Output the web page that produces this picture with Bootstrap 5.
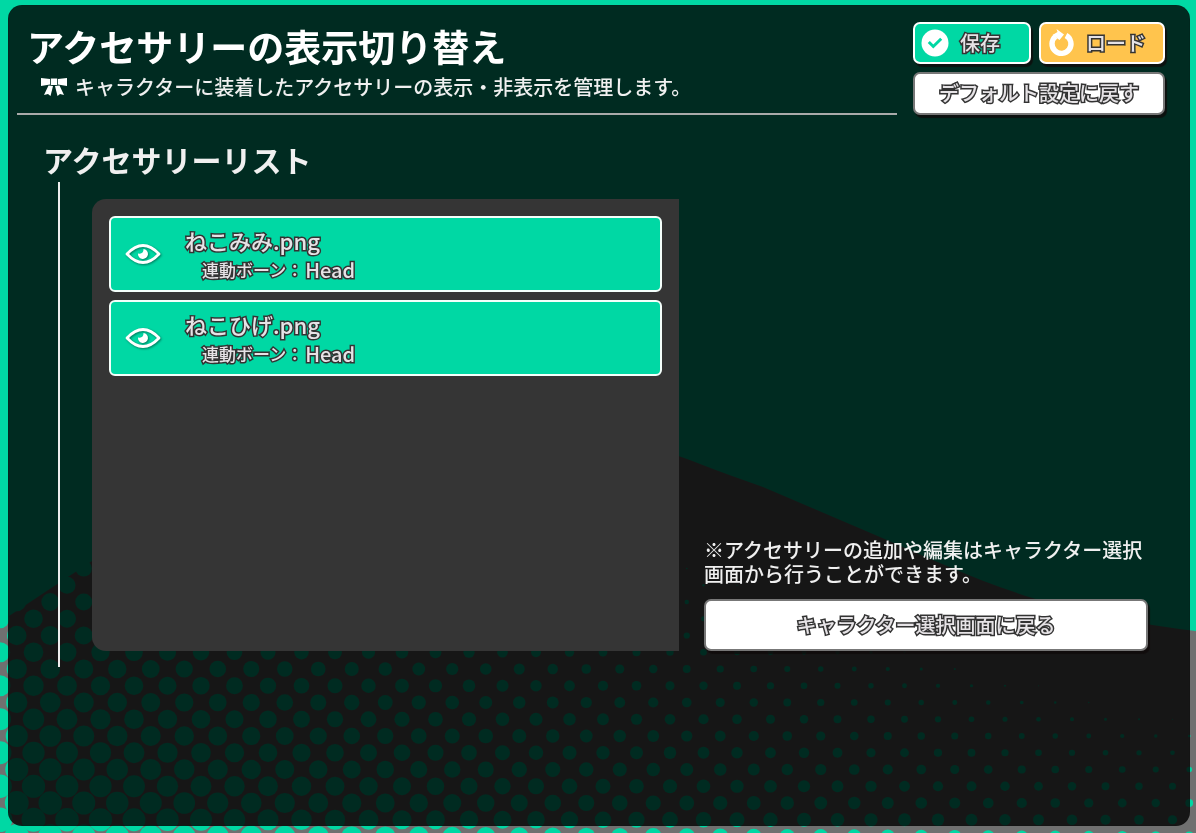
<!DOCTYPE html>
<html lang="ja">
<head>
<meta charset="utf-8">
<meta name="viewport" content="width=device-width, initial-scale=1">
<title>アクセサリーの表示切り替え</title>
<link rel="stylesheet" href="https://cdn.jsdelivr.net/npm/bootstrap@5.3.0/dist/css/bootstrap.min.css">
<style>
  :root { --mint: #00d8a4; --amber: #ffc44d; --slate: #353535; }
  body {
    background: var(--mint);
    color: #f0f0f0;
    font-family: "Noto Sans CJK JP", "Noto Sans", sans-serif;
    font-size: 20px;
    line-height: 24px;
  }
  .backdrop { position: fixed; inset: 0; width: 100%; height: 100%; z-index: -1; }
  .page { padding: 5px 6px 7px 8px; }
  .frame {
    background: rgba(0, 0, 0, .8);
    border: 1px solid rgba(0, 0, 0, .1);
    border-radius: 14px;
  }
  .page-head { padding: 16px 24px 0 8px; gap: 16px; }
  .head-text { border-bottom: 2px solid #aaa; padding-left: 10px; }
  .page-title { font-size: 37px; line-height: 48px; font-weight: 700; color: #fff; }
  .page-sub { padding: 5px 0 0 14px; gap: 8px; font-weight: 500; }
  .actions { width: 252px; gap: 8px; }
  .game-btn {
    border: 2px solid #fff;
    border-radius: 7px;
    box-shadow: 2px 3px 1px rgba(15, 10, 10, .8);
    font-size: 20px;
    line-height: 24px;
    padding: 5px 6px;
    font-weight: 500;
  }
  .game-btn.save { background: var(--mint); width: 118px; gap: 11px; }
  .game-btn.load { background: var(--amber); }
  .game-btn.plain { background: #fff; border-color: #777; padding: 7px 6px 8px; }
  .game-btn.tall { padding: 12px 6px; }
  .inked {
    color: #e6e3e6;
    -webkit-text-stroke: 3px #333;
    paint-order: stroke fill;
  }
  .page-body { padding: 26px 41px 158px 34px; }
  .list-title { font-size: 30px; line-height: 36px; font-weight: 700; margin-bottom: 5px; }
  .rail { border-left: 2px solid #eee; margin-left: 15px; padding: 17px 0 0 32px; gap: 25px; }
  .rail-main { flex: 553 1 0; margin-bottom: 16px; }
  .rail-side { flex: 444 1 0; margin-bottom: 16px; gap: 13px; font-weight: 500; }
  .acc-panel {
    background: var(--slate);
    border-radius: 14px 0 0 14px;
    padding: 17px;
    gap: 8px;
  }
  .acc-item {
    background: var(--mint);
    border: 2px solid #f4fffb;
    border-radius: 6px;
    padding: 6px 14px;
    gap: 24px;
  }
  .acc-name { font-size: 22px; line-height: 32px; font-weight: 500; }
  .acc-bone { font-size: 20px; line-height: 28px; padding-left: 17px; font-weight: 500; gap: 2px; }
  .acc-key { font-size: 17px; }
  .eye { filter: drop-shadow(1px 1px 1px rgba(0, 60, 45, .6)); }
</style>
</head>
<body>
<svg class="backdrop" viewBox="0 0 1196 833" preserveAspectRatio="xMidYMid slice" aria-hidden="true">
  <path fill="#707070" d="M0 622 L9 616 L92 561 C250 455 420 400 560 420 C620 430 680 458 763 487 L880 537 C980 580 1040 612 1196 631 V833 H0 Z"/>
  <g id="dots" fill="#00d8a4"></g>
</svg>
<div class="page min-vh-100 d-flex">
  <div class="frame flex-fill d-flex flex-column">
    <header class="page-head d-flex">
      <div class="head-text flex-fill">
        <h1 class="page-title mb-0">アクセサリーの表示切り替え</h1>
        <p class="page-sub d-flex align-items-center mb-0">
          <svg width="26" height="20" viewBox="0 0 26 20" fill="#fff" aria-hidden="true">
            <path d="M0 1 L9 2 V7.500 L0 9 Z M26 1 L17 2 V7.500 L26 9 Z M9.800 1.500 H16.200 V8 H9.800 Z M7.500 8.500 L12 9 L9.500 19 L7 17 L3 18 Z M18.500 8.500 L14 9 L16.500 19 L19 17 L23 18 Z"/>
          </svg>
          <span>キャラクターに装着したアクセサリーの表示・非表示を管理します。</span>
        </p>
      </div>
      <div class="actions d-flex flex-column flex-shrink-0">
        <div class="d-flex gap-2">
          <button type="button" class="btn game-btn save d-flex align-items-center">
            <svg width="28" height="28" viewBox="0 0 28 28" aria-hidden="true"><circle cx="14" cy="14" r="13.500" fill="#fff"/><path d="M7.800 13 L12.300 17.500 L20.200 9.800" fill="none" stroke="#00d8a4" stroke-width="3"/></svg>
            <span class="inked">保存</span>
          </button>
          <button type="button" class="btn game-btn load flex-fill d-flex align-items-center">
            <svg width="28" height="28" viewBox="0 0 28 28" aria-hidden="true"><path d="M19 6.500 A9.500 9.500 0 1 1 8.500 7.500" fill="none" stroke="#fff" stroke-width="5.400"/><path d="M9.500 0 L10.500 3 L5.500 6 L12.500 11 L17 5.500 Z" fill="#fff"/></svg>
            <span class="inked flex-fill">ロード</span>
          </button>
        </div>
        <button type="button" class="btn game-btn plain"><span class="inked">デフォルト設定に戻す</span></button>
      </div>
    </header>
    <main class="page-body flex-fill d-flex flex-column">
      <h2 class="list-title">アクセサリーリスト</h2>
      <div class="rail flex-fill d-flex">
        <div class="rail-main acc-panel d-flex flex-column">
          <button type="button" class="btn acc-item d-flex align-items-center text-start" aria-pressed="true">
            <svg class="eye" width="36" height="24" viewBox="0 0 36 24" aria-hidden="true"><path d="M2 12 Q10 3.500 18 3.500 Q26 3.500 34 12 Q26 20.500 18 20.500 Q10 20.500 2 12 Z" fill="none" stroke="#fff" stroke-width="2.800" stroke-linejoin="round"/><path d="M18.500 7 A5 5 0 1 1 13 11.500 Q18.500 12.500 18.500 7 Z" fill="#fff"/></svg>
            <span>
              <span class="acc-name inked d-block">ねこみみ.png</span>
              <span class="acc-bone inked d-flex"><span class="acc-key">連動ボーン：</span><span>Head</span></span>
            </span>
          </button>
          <button type="button" class="btn acc-item d-flex align-items-center text-start" aria-pressed="true">
            <svg class="eye" width="36" height="24" viewBox="0 0 36 24" aria-hidden="true"><path d="M2 12 Q10 3.500 18 3.500 Q26 3.500 34 12 Q26 20.500 18 20.500 Q10 20.500 2 12 Z" fill="none" stroke="#fff" stroke-width="2.800" stroke-linejoin="round"/><path d="M18.500 7 A5 5 0 1 1 13 11.500 Q18.500 12.500 18.500 7 Z" fill="#fff"/></svg>
            <span>
              <span class="acc-name inked d-block">ねこひげ.png</span>
              <span class="acc-bone inked d-flex"><span class="acc-key">連動ボーン：</span><span>Head</span></span>
            </span>
          </button>
        </div>
        <div class="rail-side d-flex flex-column justify-content-end">
          <p class="mb-0">※アクセサリーの追加や編集はキャラクター選択画面から行うことができます。</p>
          <button type="button" class="btn game-btn plain tall"><span class="inked">キャラクター選択画面に戻る</span></button>
        </div>
      </div>
    </main>
  </div>
</div>
<script src="https://cdn.jsdelivr.net/npm/bootstrap@5.3.0/dist/js/bootstrap.bundle.min.js"></script>
<script>
  // Halftone: dots on a staggered grid that shrink toward the upper right.
  const step = 16.75, dots = document.getElementById('dots');
  for (let row = -8; row <= 10; row++) {
    const y = 669 + row * step;
    for (let col = (row & 1) ? 0 : 1; col < 73; col += 2) {
      const x = col * step;
      let r = 10.3 + .013 * (y - 669) - .0093 * x + .0000185 * (y - 669) * x;
      if (r < 2) r -= (2 - r) * .8;
      if (r < .4) continue;
      const c = document.createElementNS('http://www.w3.org/2000/svg', 'circle');
      c.setAttribute('cx', x); c.setAttribute('cy', y); c.setAttribute('r', r.toFixed(1));
      dots.appendChild(c);
    }
  }
</script>
</body>
</html>
